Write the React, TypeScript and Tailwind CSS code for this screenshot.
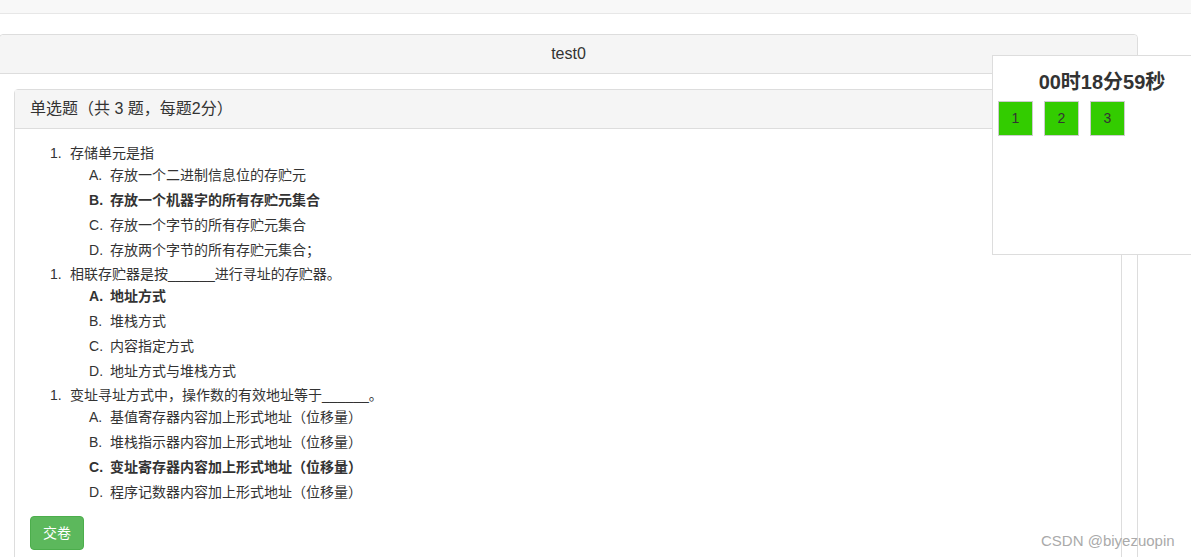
import React from "react";

type Question = { title: string; options: string[]; answer: number };

const questions: Question[] = [
  {
    title: "存储单元是指",
    options: [
      "存放一个二进制信息位的存贮元",
      "存放一个机器字的所有存贮元集合",
      "存放一个字节的所有存贮元集合",
      "存放两个字节的所有存贮元集合；",
    ],
    answer: 1,
  },
  {
    title: "相联存贮器是按______进行寻址的存贮器。",
    options: ["地址方式", "堆栈方式", "内容指定方式", "地址方式与堆栈方式"],
    answer: 0,
  },
  {
    title: "变址寻址方式中，操作数的有效地址等于______。",
    options: [
      "基值寄存器内容加上形式地址（位移量）",
      "堆栈指示器内容加上形式地址（位移量）",
      "变址寄存器内容加上形式地址（位移量）",
      "程序记数器内容加上形式地址（位移量）",
    ],
    answer: 2,
  },
];

const letters = ["A", "B", "C", "D"];

function QuestionBlock({ q }: { q: Question }) {
  return (
    <div>
      <div className="flex leading-[21px]">
        <span className="w-10 shrink-0 pl-5">1.</span>
        <span>{q.title}</span>
      </div>
      <div className="pl-10">
        {q.options.map((opt, i) => (
          <div
            key={letters[i]}
            className={`mb-[3px] flex leading-[22px] ${i === q.answer ? "font-bold" : ""}`}
          >
            <span className="w-10 shrink-0 pl-[19px]">{letters[i]}.</span>
            <span>{opt}</span>
          </div>
        ))}
      </div>
    </div>
  );
}

export default function App() {
  return (
    <div
      className="relative min-h-[557px] overflow-hidden bg-white text-[14px] text-[#333]"
      style={{ fontFamily: '"Liberation Sans", "Noto Sans CJK SC", sans-serif' }}
    >
      <div className="h-[14px] border-b border-[#e7e7e7] bg-[#f8f8f8]" />

      <div className="mt-5 -ml-px w-[1139px] rounded border border-[#ddd]">
        <div className="h-[39px] rounded-t border-b border-[#ddd] bg-[#f5f5f5] text-center text-[16px] leading-[38px]">
          test0
        </div>
        <div className="py-[15px] pr-[15px] pl-[14px]">
          <div className="rounded border border-[#ddd]">
            <div className="h-[39px] border-b border-[#ddd] bg-[#f5f5f5] px-[15px] text-[16px] leading-[38px]">
              单选题（共 3 题，每题2分）
            </div>
            <div className="px-[15px] pt-[14px] pb-10">
              {questions.map((q) => (
                <QuestionBlock key={q.title} q={q} />
              ))}
              <button className="mt-[10px] h-[34px] w-[54px] rounded border border-[#4cae4c] bg-[#5cb85c] text-[14px] text-white">
                交卷
              </button>
            </div>
          </div>
        </div>
      </div>

      <div className="absolute top-[55px] left-[992px] h-[200px] w-[220px] border border-[#ddd] bg-white">
        <div className="pt-[12px] text-center text-[20px] leading-[28px] font-bold">
          00时18分59秒
        </div>
        <div className="mt-[5px] flex gap-[11px] pl-[5px]">
          {[1, 2, 3].map((n) => (
            <div
              key={n}
              className="flex h-[35px] w-[35px] items-center justify-center border border-[#ccc] bg-[#33cc00] text-[14px]"
            >
              {n}
            </div>
          ))}
        </div>
      </div>

      <div className="absolute top-[530px] left-[1041px] text-[15px] text-[#aaa]">
        CSDN @biyezuopin
      </div>
    </div>
  );
}
